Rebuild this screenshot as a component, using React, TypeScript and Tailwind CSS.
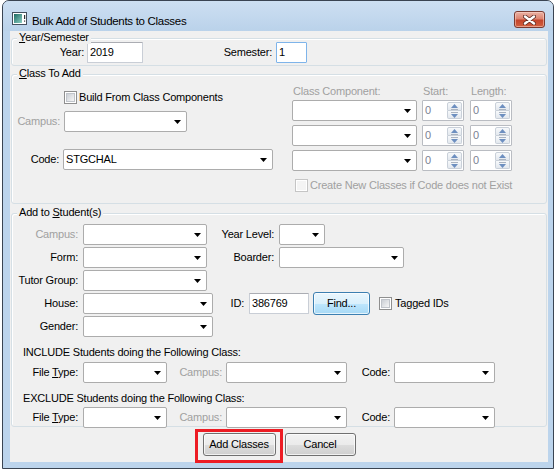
import React from "react";

const Arrow = () => (
  <svg width="7" height="4" viewBox="0 0 7 4" className="shrink-0">
    <path d="M0 0H7L3.5 4Z" fill="#000" />
  </svg>
);

const Combo = ({ w, text }: { w: string; text?: string }) => (
  <div
    className={`${w} h-[21px] shrink-0 flex items-center bg-white border border-[#acacac] rounded-[2px] pl-[2px] pr-[5px]`}
  >
    <span className="flex-1 truncate">{text ?? ""}</span>
    <Arrow />
  </div>
);

const TextBox = ({ w, text, focus }: { w: string; text: string; focus?: boolean }) => (
  <div
    className={`${w} h-[21px] shrink-0 flex items-center bg-white border rounded-[1px] pl-[2px] ${
      focus ? "border-[#7eb4ea]" : "border-[#c9ced6] border-t-[#abadb3]"
    }`}
  >
    {text}
  </div>
);

const Check = ({ disabled }: { disabled?: boolean }) => (
  <div
    className={`w-[13px] h-[13px] shrink-0 border flex items-center justify-center bg-white ${
      disabled ? "border-[#c5c5c5]" : "border-[#8f8f8f]"
    }`}
  >
    <div
      className={`w-[9px] h-[9px] ${
        disabled
          ? "bg-[#f4f4f4]"
          : "bg-gradient-to-br from-[#cbcfd5] to-[#f6f6f6] border border-[#c0c4ca]"
      }`}
    />
  </div>
);

const Spin = () => (
  <div className="w-[42px] h-[21px] shrink-0 flex bg-white border border-[#b9bcc2] rounded-[1px]">
    <div className="flex-1 flex items-center pl-[2px] text-[#7b7f92]">0</div>
    <div className="w-[15px] flex flex-col my-[1px] mr-[1px]">
      <div className="flex-1 flex flex-col items-center justify-center gap-[1px] bg-gradient-to-b from-[#f7f9fb] to-[#e3e8ee] border border-[#c9d0d9] rounded-t-[2px]">
        <svg width="7" height="4" viewBox="0 0 7 4">
          <path d="M0 4H7L3.5 0Z" fill="#6d8fc0" />
        </svg>
        <div className="w-[7px] h-[1px] bg-[#a9b3c1]" />
      </div>
      <div className="flex-1 flex flex-col items-center justify-center gap-[1px] bg-gradient-to-b from-[#f7f9fb] to-[#e3e8ee] border border-t-0 border-[#c9d0d9] rounded-b-[2px]">
        <div className="w-[7px] h-[1px] bg-[#a9b3c1]" />
        <svg width="7" height="4" viewBox="0 0 7 4">
          <path d="M0 0H7L3.5 4Z" fill="#6d8fc0" />
        </svg>
      </div>
    </div>
  </div>
);

const Group = ({
  label,
  h,
  mt,
  children,
}: {
  label: React.ReactNode;
  h: string;
  mt: string;
  children: React.ReactNode;
}) => (
  <div className={`relative ${mt} mx-[1px] ${h} border border-[#d5dfe5] rounded-[3px] shadow-[inset_1px_1px_0_#fff]`}>
    <span className="absolute left-[5px] top-[-8px] px-[2px] bg-[#f0f0f0] leading-[13px]">{label}</span>
    {children}
  </div>
);

const Btn = ({ w, children, hot }: { w: string; children: React.ReactNode; hot?: boolean }) => (
  <div
    className={`${w} h-[23px] shrink-0 flex items-center justify-center rounded-[3px] border ${
      hot
        ? "border-[#3c7fb1] bg-[linear-gradient(to_bottom,#eaf6fd_0%,#d9f0fc_50%,#bee6fd_51%,#a7d9f5_100%)]"
        : "border-[#707070] bg-[linear-gradient(to_bottom,#f2f2f2_0%,#ebebeb_50%,#dddddd_51%,#cfcfcf_100%)]"
    } shadow-[inset_0_0_0_1px_rgba(255,255,255,0.7)]`}
  >
    {children}
  </div>
);

const gray = "text-[#a0a0a0]";

export default function App() {
  return (
    <div className="w-[556px] h-[472px] bg-white overflow-hidden font-['Liberation_Sans',Arial,sans-serif] text-[11px] leading-[13px] tracking-[-0.2px] text-black">
      <div className="ml-[2px] w-[552px] h-[469px] border border-[#3a4452] rounded-t-[7px] bg-[#bcd4ec] flex flex-col">
        {/* Title bar */}
        <div className="h-[30px] shrink-0 flex items-start pl-[9px] pr-[8px] rounded-t-[6px] bg-gradient-to-b from-[#cddff2] to-[#bad2ea]">
          <svg width="15" height="13" viewBox="0 0 15 13" className="mt-[11px] shrink-0">
            <defs>
              <linearGradient id="ig" x1="0" y1="0" x2="1" y2="1">
                <stop offset="0" stopColor="#1d6a63" />
                <stop offset="1" stopColor="#8ccfc3" />
              </linearGradient>
            </defs>
            <rect x="0.5" y="0.5" width="14" height="12" fill="#fff" stroke="#45505e" />
            <rect x="2" y="2" width="8" height="9" fill="url(#ig)" />
            <rect x="12" y="3" width="1.2" height="4" fill="#333" />
            <rect x="12" y="8.5" width="1.2" height="1.2" fill="#333" />
          </svg>
          <span className="ml-[5px] mt-[13px] text-[11.5px] leading-[14px] tracking-[-0.3px]">
            Bulk Add of Students to Classes
          </span>
          <div className="ml-auto mt-[10px] w-[31px] h-[17px] rounded-[3px] border border-[#7a3a30] bg-[linear-gradient(to_bottom,#eab2a5_0%,#dd8470_45%,#c4452c_55%,#d2603f_100%)] shadow-[inset_0_0_0_1px_rgba(255,220,210,0.5)] flex items-center justify-center">
            <svg width="13" height="10" viewBox="0 0 13 10">
              <path d="M2 1.5L11 8.5M11 1.5L2 8.5" stroke="#5b2a22" strokeWidth="4" strokeLinecap="round" />
              <path d="M2 1.5L11 8.5M11 1.5L2 8.5" stroke="#fff" strokeWidth="2.4" strokeLinecap="round" />
            </svg>
          </div>
        </div>

        {/* Client area */}
        <div className="ml-[7px] w-[538px] h-[431px] shrink-0 bg-[#f0f0f0] flex flex-col">
          <Group
            mt="mt-[7px]"
            h="h-[28px]"
            label={
              <>
                <span className="underline">Y</span>ear/Semester
              </>
            }
          >
            <div className="flex items-center pt-[3px]">
              <span className="w-[72px] text-right">Year:</span>
              <div className="ml-[3px]">
                <TextBox w="w-[56px]" text="2019" />
              </div>
              <span className="w-[129px] text-right">Semester:</span>
              <div className="ml-[4px]">
                <TextBox w="w-[31px]" text="1" focus />
              </div>
            </div>
          </Group>

          <Group
            mt="mt-[8px]"
            h="h-[130px]"
            label={
              <>
                <span className="underline">C</span>lass To Add
              </>
            }
          >
            <div className="flex">
              <div className="w-[280px] flex flex-col">
                <div className="mt-[16px] ml-[52px] h-[13px] flex items-center gap-[2px]">
                  <Check />
                  <span>Build From Class Components</span>
                </div>
                <div className="mt-[7px] h-[21px] flex items-center">
                  <span className={`w-[48px] text-right ${gray}`}>Campus:</span>
                  <div className="ml-[4px]">
                    <Combo w="w-[123px]" />
                  </div>
                </div>
                <div className="mt-[17px] h-[21px] flex items-center">
                  <span className="w-[47px] text-right">Code:</span>
                  <div className="ml-[4px]">
                    <Combo w="w-[210px]" text="STGCHAL" />
                  </div>
                </div>
              </div>
              <div className="flex flex-col">
                <div className={`mt-[10px] h-[13px] flex ${gray}`}>
                  <span className="w-[130px] pl-[1px]">Class Component:</span>
                  <span className="w-[48px] pl-[1px]">Start:</span>
                  <span className="pl-[1px]">Length:</span>
                </div>
                <div className="mt-[2px] flex flex-col gap-[4px]">
                  {[0, 1, 2].map((i) => (
                    <div key={i} className="flex items-center">
                      <Combo w="w-[125px]" />
                      <div className="ml-[5px]">
                        <Spin />
                      </div>
                      <div className="ml-[6px]">
                        <Spin />
                      </div>
                    </div>
                  ))}
                </div>
                <div className="mt-[8px] ml-[3px] h-[13px] flex items-center gap-[2px]">
                  <Check disabled />
                  <span className={gray}>Create New Classes if Code does not Exist</span>
                </div>
              </div>
            </div>
          </Group>

          <Group
            mt="mt-[9px]"
            h="h-[214px]"
            label={
              <>
                Add to <span className="underline">S</span>tudent(s)
              </>
            }
          >
            <div className="mt-[10px] flex flex-col gap-[2px]">
              <div className="h-[21px] flex items-center">
                <span className={`w-[66px] text-right ${gray}`}>Campus:</span>
                <div className="ml-[5px]">
                  <Combo w="w-[124px]" />
                </div>
                <span className="w-[67px] text-right">Year Level:</span>
                <div className="ml-[5px]">
                  <Combo w="w-[46px]" />
                </div>
              </div>
              <div className="h-[21px] flex items-center">
                <span className="w-[66px] text-right">Form:</span>
                <div className="ml-[5px]">
                  <Combo w="w-[124px]" />
                </div>
                <span className="w-[67px] text-right">Boarder:</span>
                <div className="ml-[5px]">
                  <Combo w="w-[125px]" />
                </div>
              </div>
              <div className="h-[21px] flex items-center">
                <span className="w-[66px] text-right">Tutor Group:</span>
                <div className="ml-[5px]">
                  <Combo w="w-[124px]" />
                </div>
              </div>
              <div className="h-[21px] flex items-center">
                <span className="w-[66px] text-right">House:</span>
                <div className="ml-[5px]">
                  <Combo w="w-[130px]" />
                </div>
                <span className="w-[31px] text-right">ID:</span>
                <div className="ml-[5px]">
                  <TextBox w="w-[60px]" text="386769" />
                </div>
                <div className="ml-[4px]">
                  <Btn w="w-[57px]" hot>
                    Find...
                  </Btn>
                </div>
                <div className="ml-[9px] flex items-center gap-[3px]">
                  <Check />
                  <span>Tagged IDs</span>
                </div>
              </div>
              <div className="h-[21px] flex items-center">
                <span className="w-[66px] text-right">Gender:</span>
                <div className="ml-[5px]">
                  <Combo w="w-[130px]" />
                </div>
              </div>
            </div>

            <div className="mt-[9px] ml-[11px] h-[13px]">INCLUDE Students doing the Following Class:</div>
            <div className="mt-[3px] h-[21px] flex items-center">
              <span className="w-[66px] text-right">
                File <span className="underline">T</span>ype:
              </span>
              <div className="ml-[5px]">
                <Combo w="w-[84px]" />
              </div>
              <span className={`w-[55px] text-right ${gray}`}>Campus:</span>
              <div className="ml-[4px]">
                <Combo w="w-[121px]" />
              </div>
              <span className="w-[43px] text-right">Code:</span>
              <div className="ml-[4px]">
                <Combo w="w-[101px]" />
              </div>
            </div>

            <div className="mt-[9px] ml-[11px] h-[13px]">EXCLUDE Students doing the Following Class:</div>
            <div className="mt-[2px] h-[21px] flex items-center">
              <span className="w-[66px] text-right">
                File <span className="underline">T</span>ype:
              </span>
              <div className="ml-[5px]">
                <Combo w="w-[84px]" />
              </div>
              <span className={`w-[55px] text-right ${gray}`}>Campus:</span>
              <div className="ml-[4px]">
                <Combo w="w-[121px]" />
              </div>
              <span className="w-[43px] text-right">Code:</span>
              <div className="ml-[4px]">
                <Combo w="w-[101px]" />
              </div>
            </div>
          </Group>

          <div className="mt-[6px] flex justify-center gap-[9px]">
            <div className="relative">
              <Btn w="w-[73px]">Add Classes</Btn>
              <div className="absolute left-[-8px] top-[-4px] w-[88px] h-[34px] border-[3px] border-[#ed1c24] pointer-events-none" />
            </div>
            <Btn w="w-[71px]">Cancel</Btn>
          </div>
        </div>
      </div>
    </div>
  );
}
